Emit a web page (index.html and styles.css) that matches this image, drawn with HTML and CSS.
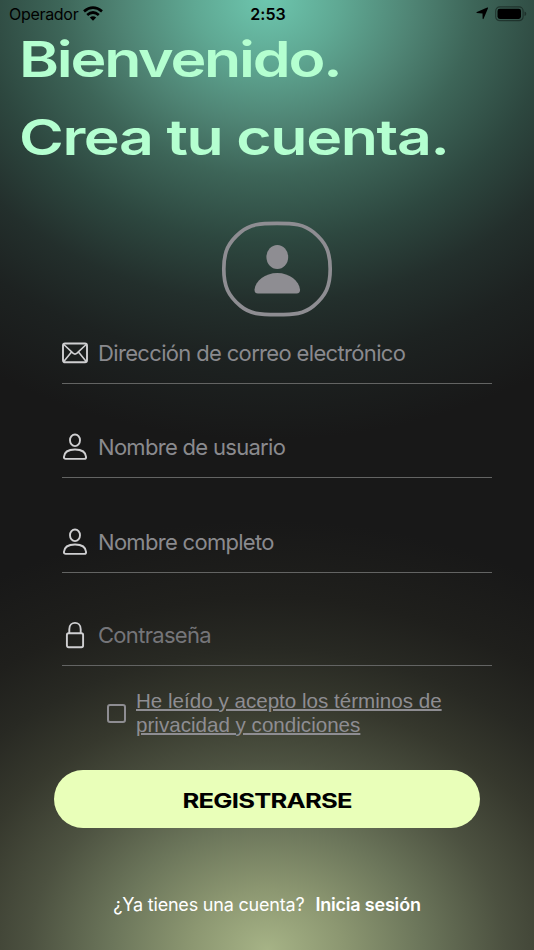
FILE: index.html
```html
<!DOCTYPE html>
<html lang="es">
<head>
<meta charset="utf-8">
<title>Crea tu cuenta</title>
<link rel="stylesheet" href="styles.css">
</head>
<body>
<main class="screen">
  <header class="status">
    <div class="carrier"><span>Operador</span>
      <svg width="20" height="15" viewBox="0 0 20 15"><g fill="none" stroke="#000" stroke-width="2.7"><path d="M1 5.400Q10-2.200 19 5.400"/><path d="M4.200 9Q10 4 15.800 9"/></g><path d="M6.800 11.500Q10 8.800 13.200 11.500L10 14.700Z"/></svg>
    </div>
    <span class="time">2:53</span>
    <div class="indicators">
      <svg width="13" height="13" viewBox="0 0 13 13"><path d="M.7 6Q0 5.400.9 5L11.300.5Q12.400.2 12 1.300L7.600 11.700Q7 12.600 6.600 11.600L6.500 6.500Z"/></svg>
      <svg width="32" height="16" viewBox="0 0 32 16"><rect x=".7" y=".9" width="27.400" height="13.800" rx="4" fill="none" stroke="#000" stroke-opacity=".4" stroke-width="1.200"/><rect x="2.500" y="2.700" width="23.500" height="10.200" rx="2.300"/><path d="M29.500 5.500Q31.300 6 31.300 7.800T29.500 10.100Z" fill-opacity=".4"/></svg>
    </div>
  </header>
  <h1 class="title"><span class="line first">Bienvenido.</span><span class="line second">Crea tu cuenta.</span></h1>
  <svg class="avatar" width="112" height="98" viewBox="0 0 112 98"><path d="M56 3.300C73 3.300 83 4.200 92.500 12.200C105 22.500 109.200 32 109.200 49S105 75.500 92.500 86C83 94 73 94.700 56 94.700S29 94 19.500 86C7 75.500 2.800 66 2.800 49S7 22.500 19.500 12.200C29 4.200 39 3.300 56 3.300Z" fill="none" stroke="#8e8d92" stroke-width="3.700"/><g fill="#8e8d92"><ellipse cx="56.300" cy="37" rx="10.900" ry="12"/><path d="M33.500 69.500C34.500 61 44 53 56.300 53S78 61 79 69.500Q79.300 73.500 75.500 73.500H37Q33.200 73.500 33.500 69.500Z"/></g></svg>
  <form class="form">
    <label class="field mail"><svg width="26" height="28" viewBox="0 0 26 28"><g fill="none" stroke="#cfcfd1" stroke-width="1.900" stroke-linejoin="round"><rect x="1" y="4.500" width="24" height="18.800" rx="2"/><path stroke-width="1.600" d="M1.800 5.500L11 14.200Q13 16 15 14.200L24.200 5.500M1.800 22.500L9.500 13M24.200 22.500L16.500 13"/></g></svg><span class="hint">Dirección de correo electrónico</span></label>
    <label class="field user"><svg width="26" height="28" viewBox="0 0 26 28"><g fill="none" stroke="#cfcfd1" stroke-width="1.900"><ellipse cx="13" cy="7.300" rx="5" ry="5.800"/><path d="M1.900 24Q2.500 16.500 13 16.500T24.100 24Q24.100 25.900 22.300 25.900H3.700Q1.900 25.900 1.900 24Z"/></g></svg><span class="hint">Nombre de usuario</span></label>
    <label class="field name"><svg width="26" height="28" viewBox="0 0 26 28"><g fill="none" stroke="#cfcfd1" stroke-width="1.900"><ellipse cx="13" cy="7.300" rx="5" ry="5.800"/><path d="M1.900 24Q2.500 16.500 13 16.500T24.100 24Q24.100 25.900 22.300 25.900H3.700Q1.900 25.900 1.900 24Z"/></g></svg><span class="hint">Nombre completo</span></label>
    <label class="field password"><svg width="26" height="28" viewBox="0 0 26 28"><g fill="none" stroke="#cfcfd1" stroke-width="1.900"><rect x="4.900" y="12.300" width="16.200" height="14" rx="1.700"/><path d="M7.300 12V8.200C7.300-.2 18.700-.2 18.700 8.200V12"/></g></svg><span class="hint">Contraseña</span></label>
    <label class="terms"><span class="box"></span><span class="terms-text">He leído y acepto los términos de<br>privacidad y condiciones</span></label>
    <button class="submit" type="button"><span>REGISTRARSE</span></button>
  </form>
  <footer class="login"><span class="ask">¿Ya tienes una cuenta?</span><b class="link">Inicia sesión</b></footer>
</main>
</body>
</html>
```
FILE: styles.css
```css
* { box-sizing: border-box; }
body { margin: 0; }
svg { display: block; flex: none; }
.screen {
  display: flex;
  flex-direction: column;
  width: 534px;
  height: 950px;
  overflow: hidden;
  font-family: Inter, "Liberation Sans", sans-serif;
  background:
    radial-gradient(520px 440px at 50% 0, #6dc6ae 0%, #5fa893 14%, #4f8474 28%, #3d6558 40%, #2d473f 55%, #232f2c 69%, #1d2221 82%, rgba(25, 26, 26, 0) 100%),
    radial-gradient(540px 430px at 50% 100%, #a6b386 0%, #8c9771 14%, #6b755a 29%, #4c5140 44%, #36382d 58%, #282923 70%, #1f1f1c 82%, rgba(25, 25, 24, 0) 100%),
    #181818;
}
.status {
  display: grid;
  grid-template-columns: 1fr auto 1fr;
  align-items: center;
  height: 27px;
  padding: 0 7px 0 9px;
  font-size: 16px;
}
.carrier, .indicators { display: flex; align-items: center; }
.carrier { gap: 5px; letter-spacing: -.3px; }
.time { font-weight: 600; letter-spacing: .1px; }
.indicators { justify-content: flex-end; gap: 6px; }
.title {
  display: flex;
  flex-direction: column;
  margin: -6px 0 0 19px;
  font-size: 49px;
  font-weight: 600;
  line-height: 77.500px;
  color: #b4ffd0;
}
.line { width: max-content; white-space: nowrap; transform-origin: 0 50%; transform: scaleX(1.240); }
.first { letter-spacing: -1.800px; }
.second { letter-spacing: -1.100px; }
.avatar { margin: 44px 0 0 221px; }
.form { display: flex; flex-direction: column; }
.field {
  display: flex;
  align-items: flex-start;
  gap: 10px;
  width: 430px;
  height: 94.500px;
  margin-left: 62px;
  padding-top: 50px;
  border-bottom: 1px solid #636463;
  color: #8a8a8e;
  font-size: 22px;
  line-height: 28px;
}
.mail { height: 66px; padding-top: 21px; }
.user { height: 94px; padding-top: 49px; }
.name { height: 95px; padding-top: 50px; }
.password { height: 93px; padding-top: 48px; color: #757579; }
.hint { white-space: nowrap; letter-spacing: -.660px; }
.user .hint, .name .hint, .password .hint { letter-spacing: -.700px; }
.terms {
  display: flex;
  align-items: center;
  gap: 10px;
  margin: 23px 0 0 107px;
  color: #8e8d92;
  font: 20.600px/24px "Liberation Sans", sans-serif;
}
.box { width: 19px; height: 19px; border: 2px solid #8e8d92; border-radius: 3px; }
.terms-text { text-decoration: underline; text-decoration-thickness: 1.500px; white-space: nowrap; }
.submit {
  display: flex;
  align-items: center;
  justify-content: center;
  width: 426px;
  height: 58px;
  margin: 33px 0 0 54px;
  padding: 3px 0 0;
  border: 0;
  border-radius: 29px;
  background: #e9ffb9;
  color: #000;
  font: 700 20px Inter, sans-serif;
}
.submit span { transform: scaleX(1.280); letter-spacing: -.600px; }
.login {
  display: flex;
  align-items: center;
  justify-content: center;
  gap: 11px;
  margin-top: 65px;
  color: #fff;
  font-size: 18px;
  line-height: 24px;
  letter-spacing: -.200px;
  white-space: nowrap;
}
.link { font-weight: 600; }
```
